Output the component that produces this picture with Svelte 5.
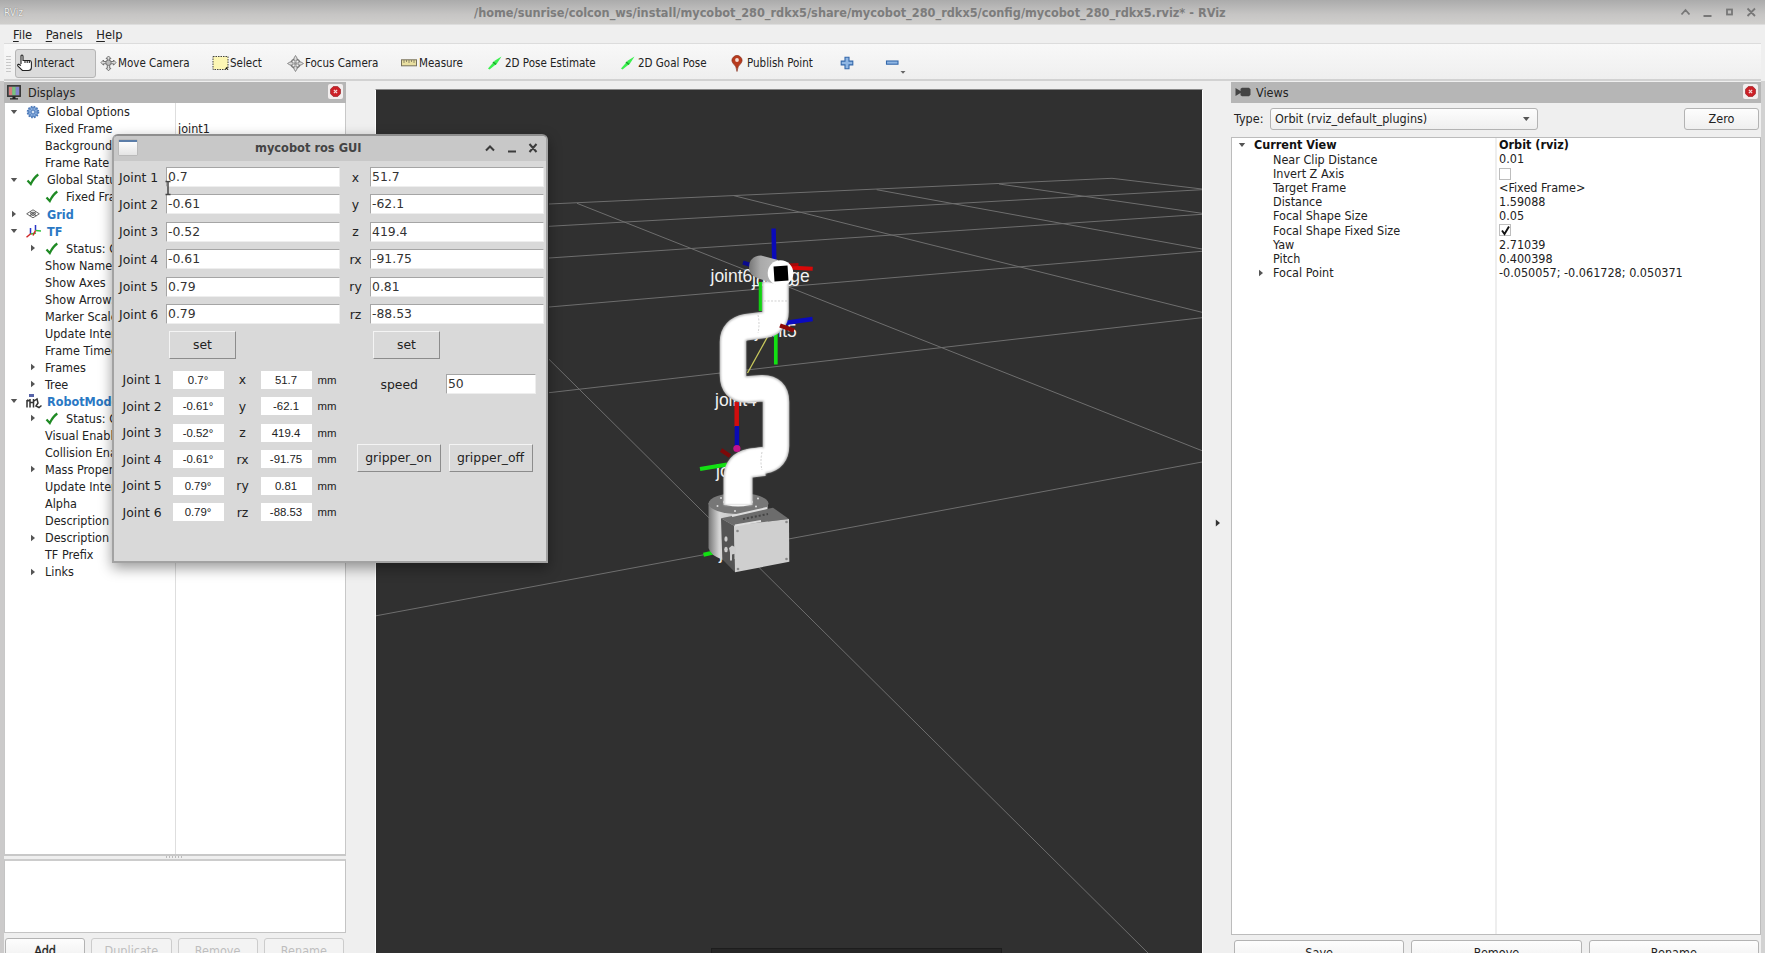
<script>
  const tools = [
    { icon: 'hand', label: 'Interact', width: 81, active: true },
    { icon: 'move', label: 'Move Camera', width: 112 },
    { icon: 'select', label: 'Select', width: 75 },
    { icon: 'focus', label: 'Focus Camera', width: 114 },
    { icon: 'ruler', label: 'Measure', width: 86 },
    { icon: 'arrow', label: '2D Pose Estimate', width: 133 },
    { icon: 'arrow', label: '2D Goal Pose', width: 111 },
    { icon: 'pin', label: 'Publish Point', width: 108 }
  ];

  const displays = [
    { d: 0, a: 'open', icon: 'gear', text: 'Global Options' },
    { d: 1, text: 'Fixed Frame', value: 'joint1' },
    { d: 1, text: 'Background Color' },
    { d: 1, text: 'Frame Rate' },
    { d: 0, a: 'open', icon: 'check', text: 'Global Status: Ok' },
    { d: 1, icon: 'check', text: 'Fixed Frame' },
    { d: 0, a: 'shut', icon: 'grid', text: 'Grid', link: true },
    { d: 0, a: 'open', icon: 'tf', text: 'TF', link: true },
    { d: 1, a: 'shut', icon: 'check', text: 'Status: Ok' },
    { d: 1, text: 'Show Names' },
    { d: 1, text: 'Show Axes' },
    { d: 1, text: 'Show Arrows' },
    { d: 1, text: 'Marker Scale' },
    { d: 1, text: 'Update Interval' },
    { d: 1, text: 'Frame Timeout' },
    { d: 1, a: 'shut', text: 'Frames' },
    { d: 1, a: 'shut', text: 'Tree' },
    { d: 0, a: 'open', icon: 'robot', text: 'RobotModel', link: true },
    { d: 1, a: 'shut', icon: 'check', text: 'Status: Ok' },
    { d: 1, text: 'Visual Enabled' },
    { d: 1, text: 'Collision Enabled' },
    { d: 1, a: 'shut', text: 'Mass Properties' },
    { d: 1, text: 'Update Interval' },
    { d: 1, text: 'Alpha' },
    { d: 1, text: 'Description Source' },
    { d: 1, a: 'shut', text: 'Description Topic' },
    { d: 1, text: 'TF Prefix' },
    { d: 1, a: 'shut', text: 'Links' }
  ];

  const views = [
    { text: 'Near Clip Distance', value: '0.01' },
    { text: 'Invert Z Axis', check: 'off' },
    { text: 'Target Frame', value: '<Fixed Frame>' },
    { text: 'Distance', value: '1.59088' },
    { text: 'Focal Shape Size', value: '0.05' },
    { text: 'Focal Shape Fixed Size', check: 'on' },
    { text: 'Yaw', value: '2.71039' },
    { text: 'Pitch', value: '0.400398' },
    { text: 'Focal Point', value: '-0.050057; -0.061728; 0.050371', a: 'shut' }
  ];

  const joints = ['0.7', '-0.61', '-0.52', '-0.61', '0.79', '0.79'];
  const axes = ['x', 'y', 'z', 'rx', 'ry', 'rz'];
  const coords = ['51.7', '-62.1', '419.4', '-91.75', '0.81', '-88.53'];

  const gridLines = [
    [549, 204, 1112, 178.3], [549, 226.3, 1202, 189.7], [549, 258, 1202, 214.3],
    [549, 307, 1202, 251.3], [549, 392.7, 1202, 317.7], [376, 615.8, 1202, 462],
    [577, 203.3, 1202, 450.7], [734, 195.7, 1202, 312.3], [876.6, 189.7, 1202, 249],
    [999, 184, 1202, 213.3], [1112, 178.3, 1202, 189], [549, 359.3, 1148, 953]
  ];

  const armPath = 'M775.5 282V312Q775.500 323 764 325L747 327Q733 329.500 733 342V375Q733 389.500 746 389.500L762 388.200Q776 388 776 402V446Q776 458.500 764 460.500L748 462.500';
  const footPath = 'M764 461.500L751 463Q738 465 738 478V505';
</script>

{#snippet glyph(name)}
  {#if name === 'hand'}
    <svg width="17" height="18" viewBox="0 0 17 18"><path d="M5 10V2.4q0-1.4 1-1.4t1 1.4V6.5h6.8q1.6.1 1.6 2v5q0 3-3 3H6.4L2 12.2q-1-1.7.6-2L5 11.6M9 6.5V9M11.2 6.5V9M13.3 6.7V9" fill="#fff" stroke="#222" stroke-width="1.1" /></svg>
  {:else if name === 'move'}
    <svg width="17" height="17" viewBox="0 0 17 17"><path d="M8.5 1l2.4 2.5H9.7v3h3.8V5L16 7.6l-2.5 2.6V8.8H9.7v4.5h1.2l-2.4 2.5-2.4-2.5h1.2V8.8H3.5v1.4L1 7.6 3.500 5v1.500h3.800v-3H6.100z" fill="#ddd" stroke="#666" stroke-width=".9" /><circle cx="8.500" cy="7.700" r="2.700" fill="#bbb" stroke="#666" stroke-width=".8" /></svg>
  {:else if name === 'select'}
    <svg width="17" height="16" viewBox="0 0 17 16"><rect x="1" y="1.500" width="15" height="13" fill="#fcf6b4" stroke="#444" stroke-dasharray="1.500 1" /><path d="M13 13.500l2.500-2v3z" fill="#111" /></svg>
  {:else if name === 'focus'}
    <svg width="17" height="17" viewBox="0 0 17 17"><circle cx="8.500" cy="8.500" r="4.500" fill="none" stroke="#777" stroke-width="1.500" /><circle cx="8.500" cy="8.500" r="1.700" fill="#999" /><path d="M8.500 .5l1.500 2.500v3h-3V3zM8.500 16.500l1.500-2.500v-3h-3v3zM.5 8.500L3 7h3v3H3zM16.500 8.500L14 7h-3v3h3z" fill="#ddd" stroke="#777" stroke-width=".8" /></svg>
  {:else if name === 'ruler'}
    <svg width="16" height="8" viewBox="0 0 16 8"><rect x=".5" y=".8" width="15" height="6" fill="#e9dfa0" stroke="#77715a" /><path d="M3 1v3M5.500 1v2M8 1v3M10.500 1v2M13 1v3" stroke="#77715a" stroke-width=".8" /></svg>
  {:else if name === 'arrow'}
    <svg width="16" height="16" viewBox="0 0 16 16"><path d="M1 13.500L8 5.500 14.500 1.500 10 8.500 2.500 14.500z" fill="#3bf04f" /><path d="M6 7l3 2.500" stroke="#1aa52c" stroke-width="1.500" /></svg>
  {:else if name === 'pin'}
    <svg width="12" height="17" viewBox="0 0 12 17"><path d="M6 16.500Q5.500 11 2.200 8.500a4.900 4.900 0 1 1 7.600 0Q6.500 11 6 16.500z" fill="#b83a1d" stroke="#7d2410" stroke-width=".6" /><circle cx="6" cy="5" r="1.900" fill="#f6ded6" /></svg>
  {:else if name === 'gear'}
    <svg width="14" height="14" viewBox="0 0 14 14"><circle cx="7" cy="7" r="5.300" fill="#7ba3d8" stroke="#4b78b8" stroke-width="2" stroke-dasharray="1.600 1.170" /><circle cx="7" cy="7" r="4.700" fill="#86abdc" stroke="#4b78b8" stroke-width=".7" /><path d="M7 3v8M3 7h8M4.200 4.200l5.600 5.600M9.800 4.200L4.200 9.800" stroke="#4b78b8" stroke-width=".7" /><circle cx="7" cy="7" r="1.700" fill="#d6e3f4" stroke="#4b78b8" stroke-width=".6" /></svg>
  {:else if name === 'check'}
    <svg width="14" height="13" viewBox="0 0 14 13"><path d="M1.500 7.500L4.800 11 Q8 4.500 12.300 1.500" fill="none" stroke="#1f8a24" stroke-width="2.200" /></svg>
  {:else if name === 'grid'}
    <svg width="14" height="10" viewBox="0 0 14 10"><path d="M7 .8L13.300 4.800 7 8.800 .7 4.800zM4 2.700l6.200 4.200M10 2.700L3.800 6.900M7 3L9.800 4.800 7 6.700 4.200 4.800z" fill="none" stroke="#555" stroke-width=".9" /></svg>
  {:else if name === 'tf'}
    <svg width="16" height="15" viewBox="0 0 16 15" fill="none" stroke-width="1.500"><path d="M4.500 10V4M9.500 6.500V1" stroke="#2b37c8" /><path d="M5 10l5-1M9.500 6.500l5.500.4" stroke="#30c240" /><path d="M5 9.500l-4.500 3.800M9.500 6.500L7 11.500" stroke="#d02626" /></svg>
  {:else if name === 'robot'}
    <svg width="16" height="15" viewBox="0 0 16 15"><path d="M3 0h5v3H3z" fill="#5663a8" /><path d="M1 6v7.500M4 5v8.500M7.500 5v8.500M4 8.500h4M8 7l3-2 1 4-2 3 3 1.500 2.500-2M1 6l3 1" fill="none" stroke="#333" stroke-width="1.500" /></svg>
  {/if}
{/snippet}

{#snippet arrowMark(kind)}
  <span class="mark">
    {#if kind === 'open'}
      <svg width="8" height="6" viewBox="0 0 8 6"><path d="M.8 1h6.400L4 5z" fill="#555" /></svg>
    {:else if kind === 'shut'}
      <svg width="6" height="8" viewBox="0 0 6 8"><path d="M1 .8v6.400L5 4z" fill="#555" /></svg>
    {/if}
  </span>
{/snippet}

{#snippet closeButton()}
  <span class="close"><svg width="11" height="11" viewBox="0 0 11 11"><path d="M3.300.5h4.400L10.500 3.300v4.400L7.700 10.500H3.300L.5 7.700V3.300z" fill="#cc1f26" stroke="#8f151a" stroke-width=".6" /><path d="M3.900 3.900l3.200 3.200M7.100 3.900L3.900 7.100" stroke="#f4dada" stroke-width="1.300" /></svg></span>
{/snippet}

<div class="window">
  <header class="titlebar">
    <span class="logo">RViz</span>
    <span class="title">/home/sunrise/colcon_ws/install/mycobot_280_rdkx5/share/mycobot_280_rdkx5/config/mycobot_280_rdkx5.rviz* - RViz</span>
    <svg class="winicons" width="80" height="14" viewBox="0 0 80 14" fill="none" stroke="#777" stroke-width="1.800"><path d="M3.500 9.500L7.500 5 11.500 9.500M25.500 11h8M69.500 3.500l7.500 7.500M77 3.500l-7.500 7.500" /><rect x="49" y="4.500" width="5" height="5" /></svg>
  </header>

  <nav class="menu">
    <span><u>F</u>ile</span><span><u>P</u>anels</span><span><u>H</u>elp</span>
  </nav>

  <div class="toolbar">
    <span class="grip"></span>
    {#each tools as tool}
      <div class="tool {tool.icon}" class:active={tool.active} style="width:{tool.width}px">
        <span class="ticon">{@render glyph(tool.icon)}</span><span>{tool.label}</span>
      </div>
    {/each}
    <svg class="plus" width="14" height="14" viewBox="0 0 14 14"><path d="M5 1.200h4v3.900h3.800v3.800H9v3.900H5V8.900H1.200V5.100H5z" fill="#8fb6e3" stroke="#3468ab" stroke-width="1.100" /></svg>
    <svg class="minus" width="20" height="20" viewBox="0 0 20 20"><rect x="1.500" y="8" width="11.500" height="3.200" fill="#8fb6e3" stroke="#3468ab" stroke-width="1.100" /><path d="M15.500 18h5l-2.500 2.800z" fill="#666" /></svg>
  </div>

  <main>
    <section class="dock left">
      <div class="dockhead">
        <svg width="14" height="15" viewBox="0 0 14 15"><rect x=".8" y=".8" width="12.400" height="10.400" fill="#888" stroke="#333" stroke-width="1.500" /><path d="M2 2h3.300v8H2z" fill="#d47d7d" /><path d="M5.300 2h3.400v8H5.300z" fill="#79c37e" /><path d="M8.700 2H12v8H8.700z" fill="#8585cf" /><path d="M5.500 11.500h3v1.800H11v1.200H3v-1.200h2.500z" fill="#222" /></svg>
        <span>Displays</span>{@render closeButton()}
      </div>
      <div class="tree">
        {#each displays as row}
          <div class="row">
            <div class="name depth{row.d}">
              {@render arrowMark(row.a)}
              {#if row.icon}<span class="ricon">{@render glyph(row.icon)}</span>{/if}
              <span class="label" class:link={row.link}>{row.text}</span>
            </div>
            <span class="value">{row.value ?? ''}</span>
          </div>
        {/each}
        <div class="filler"></div>
      </div>
      <div class="splitter"><i></i></div>
      <div class="help"></div>
      <div class="buttons">
        <button class="strong">Add</button><button disabled>Duplicate</button><button disabled>Remove</button><button disabled>Rename</button>
      </div>
    </section>

    <section class="viewport">
      <svg width="826" height="863" viewBox="376 90 826 863">
        <defs>
          <filter id="soft" filterUnits="userSpaceOnUse" x="690" y="260" width="130" height="270"><feGaussianBlur stdDeviation="1.300" /></filter>
          <linearGradient id="drum"><stop offset="0" stop-color="#777" /><stop offset=".18" stop-color="#d5d5d5" /><stop offset=".5" stop-color="#c4c4c4" /><stop offset="1" stop-color="#888" /></linearGradient>
          <linearGradient id="hub"><stop offset="0" stop-color="#777" /><stop offset=".4" stop-color="#aaa" /><stop offset="1" stop-color="#bbb" /></linearGradient>
        </defs>
        <g stroke="#6e6e6e" stroke-width="1">
          {#each gridLines as [x1, y1, x2, y2]}<line {x1} {y1} {x2} {y2} />{/each}
        </g>
        <g class="frames">
          <text x="710.500" y="281.500">joint6_flange</text>
          <text x="752" y="285.500">joint6</text>
          <text x="755" y="337">joint5</text>
          <text x="715" y="406">joint4</text>
          <text x="716" y="477">joint2</text>
          <text x="719" y="559">joint1</text>
        </g>
        <g fill="none" stroke-linecap="butt">
          <path d="M743 262.500l9 3" stroke="#0a0a8c" stroke-width="4" />
          <path d="M773.600 228.500l.7 34" stroke="#0a0ab8" stroke-width="4.500" />
          <path d="M760.500 282v29" stroke="#12d012" stroke-width="3.500" />
          <path d="M768 336L747.500 373" stroke="#c9c95c" stroke-width="1.300" />
          <path d="M775.800 333V364.500" stroke="#12e012" stroke-width="3.700" />
          <path d="M736.700 402V427" stroke="#d00d0d" stroke-width="4.500" />
          <path d="M736.900 426V447" stroke="#0a0ab4" stroke-width="4.500" />
          <path d="M721 450l9 6" stroke="#7c0808" stroke-width="4" />
          <path d="M700 469l27-4.500" stroke="#12e012" stroke-width="4" />
          <path d="M703.500 554.700l10-2.200" stroke="#12e012" stroke-width="4" />
          <path d="M788 267.500l24.700 1.300" stroke="#d80808" stroke-width="4" />
          <path d="M788 265l10.500-.6" stroke="#a80808" stroke-width="3" />
          <path d="M785 323l27.600-4" stroke="#0a0ac0" stroke-width="4.500" />
        </g>
        <path d="M708.500 503V548Q710 555 723 560L768 548V503z" fill="url(#drum)" />
        <ellipse cx="738.500" cy="503.500" rx="30" ry="10.500" fill="#777" />
        <g fill="#ddd"><circle cx="717.500" cy="506" r="1" /><circle cx="721" cy="498" r="1" /><circle cx="756" cy="506.500" r="1" /><circle cx="758" cy="498.500" r="1" /><circle cx="735" cy="511" r="1" /></g>
        <ellipse cx="738" cy="502" rx="14.800" ry="4.500" fill="#f2f2f2" />
        <path d={armPath} fill="none" stroke="#b0b0b0" stroke-width="26.500" />
        <path d={footPath} fill="none" stroke="#b8b8b8" stroke-width="29" />
        <path d={armPath} fill="none" stroke="#fff" stroke-width="24.500" filter="url(#soft)" />
        <path d={footPath} fill="none" stroke="#fff" stroke-width="27" filter="url(#soft)" />
        <path d="M764 301h23M758 315q2 9 0 18M762 452q-2 10 0 18" fill="none" stroke="#bbb" stroke-width=".7" stroke-dasharray="2 1.500" />
        <circle cx="736.900" cy="448.500" r="3.600" fill="#c4148c" />
        <path d="M780 325.500l14 5" stroke="#8e0808" stroke-width="4.500" />
        <path d="M749 268Q749 256 761 255.500L778 260V285L760 279Q749 276 749 268z" fill="url(#hub)" />
        <circle cx="780.500" cy="273" r="12.800" fill="#fff" />
        <path d="M773.500 266.500l14-1 1 15-14 1z" fill="#000" />
        <path d="M721 518.300L773 507.700 789 519 734 525.700z" fill="#6c6c6c" />
        <path d="M721 518.300L734 525.700 735 572.300 722.300 559.300z" fill="#545454" />
        <path d="M734 525.700L789 519 789.300 561.700 735 572.300z" fill="#cfcfcf" />
        <path d="M732 516l35-8M735 525.500l26-4.500" stroke="#ddd" stroke-width="2" />
        <path d="M743 519l25-5" stroke="#444" stroke-width="2" stroke-dasharray="2 2" />
        <g fill="#888"><circle cx="737.500" cy="531" r="1.300" /><circle cx="786.500" cy="522" r="1.300" /><circle cx="786.500" cy="559" r="1.300" /><circle cx="738" cy="569" r="1.300" /></g>
        <g fill="#ccc"><ellipse cx="726" cy="539" rx="1.600" ry="2.800" /><ellipse cx="726" cy="549.500" rx="1.800" ry="2.800" /><path d="M729 548l3-2.500 4 2v6l-4 1v6h-2v-8z" /></g>
        <rect x="711.500" y="948.500" width="290" height="6" fill="#262626" stroke="#1d1d1d" />
      </svg>
    </section>

    <div class="sash"><svg width="6" height="10" viewBox="0 0 6 10"><path d="M.8 1.500v7L5 5z" fill="#333" /></svg></div>

    <section class="dock right">
      <div class="dockhead">
        <svg width="16" height="10" viewBox="0 0 16 10"><path d="M.5 1L5.500 4V1.800L7 .8h7l1.500 1.500v5.400L14 9.200H7L5.500 8.200V6L.5 9z" fill="#444" /></svg>
        <span>Views</span>{@render closeButton()}
      </div>
      <div class="type">
        <span>Type:</span>
        <div class="combo"><span>Orbit (rviz_default_plugins)</span><svg width="9" height="6" viewBox="0 0 9 6"><path d="M1 1h6.600L4.300 5z" fill="#555" /></svg></div>
        <button>Zero</button>
      </div>
      <div class="vtree">
        <div class="row head"><div class="name">{@render arrowMark('open')}<b>Current View</b></div><b class="value">Orbit (rviz)</b></div>
        {#each views as row}
          <div class="row">
            <div class="name sub">{@render arrowMark(row.a)}<span>{row.text}</span></div>
            <span class="value">
              {#if row.check}
                <i class="box">{#if row.check === 'on'}<svg width="11" height="11" viewBox="0 0 11 11"><path d="M2 5.500L4.500 9 9 1.500" fill="none" stroke="#111" stroke-width="1.900" /></svg>{/if}</i>
              {:else}{row.value}{/if}
            </span>
          </div>
        {/each}
        <div class="filler"></div>
      </div>
      <div class="buttons"><button>Save</button><button>Remove</button><button>Rename</button></div>
    </section>
  </main>

  <div class="dialog">
    <div class="dtitle">
      <i class="appicon"></i><span>mycobot ros GUI</span>
      <svg width="52" height="14" viewBox="0 0 52 14" fill="none" stroke="#3c3c3c" stroke-width="2"><path d="M3 9.500L7 5.500 11 9.500M25 10.500h8M46.500 3l7 8M53.500 3l-7 8" transform="translate(-3 0)" /></svg>
    </div>
    <div class="dbody">
      <div class="entries">
        {#each joints as joint, i}
          <span>Joint {i + 1}</span><div class="entry">{joint}</div>
          <span class="axis">{axes[i]}</span><div class="entry">{coords[i]}</div>
        {/each}
      </div>
      <div class="sets"><div class="tkbtn">set</div><div class="tkbtn">set</div></div>
      <div class="lower">
        <div class="readout">
          {#each joints as joint, i}
            <span>Joint {i + 1}</span><em>{joint}°</em><span class="axis">{axes[i]}</span><em>{coords[i]}</em><small>mm</small>
          {/each}
        </div>
        <div class="side">
          <div class="speed"><span>speed</span><div class="entry">50</div></div>
          <div class="grippers"><div class="tkbtn">gripper_on</div><div class="tkbtn">gripper_off</div></div>
        </div>
      </div>
    </div>
    <svg class="ibeam" width="8" height="16" viewBox="0 0 8 16"><path d="M1.500 1.500h1.700q.8 0 .8.800v11.400q0 .8.800.8h1.700M6.500 1.500H4.800q-.8 0-.8.800M1.500 14.500h1.700q.8 0 .8-.8" fill="none" stroke="#444" stroke-width="1.500" /></svg>
  </div>
</div>

<style>
  :global(body) { background: #efefef; }
  .window {
    position: relative; display: flex; flex-direction: column; box-sizing: border-box;
    width: 1765px; height: 953px; overflow: hidden; background: #efefef; color: #222;
    font: 12.5px/17px "DejaVu Sans Condensed", "DejaVu Sans", sans-serif; font-stretch: condensed; white-space: nowrap;
  }
  svg { display: block; flex: none; }
  button { font: inherit; color: #222; padding: 0; box-sizing: border-box; border: 1px solid #b3b3b3; border-radius: 3px; background: linear-gradient(#fdfdfd, #efefef); }
  .titlebar { height: 25px; flex: none; display: flex; align-items: center; background: linear-gradient(#ababab, #c6c5c4 60%, #cfcecc); border-bottom: 1px solid #ddd; box-sizing: border-box; }
  .logo { width: 46px; padding-left: 4px; font-size: 10px; color: #eee; text-shadow: 0 0 1px #555; }
  .title { flex: 1; padding-left: 424px; font-weight: bold; font-size: 12.610px; color: #7c7c7c; }
  .winicons { margin-right: 7px; }
  .menu { height: 19px; flex: none; display: flex; gap: 13.500px; align-items: center; padding-left: 9px; margin: 0 4px; border-bottom: 1px solid #dcdcdc; box-sizing: border-box; font-size: 12.800px; }
  .menu u { text-underline-offset: 2px; }
  .toolbar { height: 37px; flex: none; display: flex; align-items: center; margin: 0 4px; padding: 3px 0 0 2px; background: linear-gradient(#f8f8f8, #efefef); border-bottom: 2px solid #d2d2d2; box-sizing: border-box; font-size: 11.5px; }
  .grip { width: 5px; height: 17px; margin-right: 4px; background: radial-gradient(circle, #c4c4c4 .8px, transparent 1px) 0 0 / 2.500px 3px; }
  .tool { display: flex; align-items: center; height: 29px; box-sizing: border-box; padding-left: 4px; }
  .tool.active { padding-left: 0; border: 1px solid #b5b5b5; border-radius: 3px; background: #dbdbdb; }
  .ticon { width: 18px; display: flex; justify-content: flex-start; flex: none; }
  .pin .ticon { width: 16px; }
  .plus { margin-left: 5px; }
  .minus { margin-left: 31px; overflow: visible; }
  main { flex: 1; min-height: 0; display: flex; border-left: 4px solid #cbcaca; border-right: 4px solid #d2d2d2; padding-top: 1px; }
  .dock { display: flex; flex-direction: column; flex: none; height: 871px; }
  .left { width: 342px; }
  .right { width: 530px; }
  .dockhead { height: 21px; flex: none; display: flex; align-items: center; gap: 7px; padding: 0 3px 1px; background: #b6b6b6; box-sizing: border-box; }
  .right .dockhead { padding: 0 3px 1px 4px; gap: 5px; }
  .close { margin-left: auto; margin-top: 2px; width: 15px; height: 15px; display: grid; place-items: center; background: #f2eeee; border-radius: 2px; align-self: flex-start; }
  .tree { height: 753px; flex: none; display: flex; flex-direction: column; box-sizing: border-box; background: #fff; border: solid #c8c8c8; border-width: 0 1px 2px 1px; padding-top: .3px; }
  .tree .row { height: 17.040px; flex: none; display: flex; }
  .tree .name { width: 171px; display: flex; align-items: center; box-sizing: border-box; border-right: 1px solid #dedede; overflow: hidden; }
  .mark { display: flex; flex: none; justify-content: center; width: 10px; }
  .depth0 { padding-left: 4px; }
  .depth0 .mark { margin-right: 7px; }
  .depth1 { padding-left: 23px; }
  .depth1 .mark { margin-right: 7px; }
  .ricon { width: 21px; flex: none; display: flex; }
  .depth0 .ricon { width: 21px; }
  .link { color: #2a78c4; font-weight: bold; }
  .tree .value { padding-left: 2px; }
  .filler { flex: 1; width: 171px; box-sizing: border-box; border-right: 1px solid #dedede; }
  .splitter { height: 3px; flex: none; display: flex; justify-content: center; }
  .splitter i { width: 18px; height: 2px; background: repeating-linear-gradient(90deg, #bbb 0 1px, transparent 1px 3px); }
  .help { height: 74px; flex: none; box-sizing: border-box; background: #fff; border: 1px solid #c4c4c4; border-top: 2px solid #ccc; }
  .buttons { display: flex; gap: 6px; padding: 5px 2px 0 1px; }
  .buttons button { flex: 1; height: 24px; }
  .left button:disabled { color: #bebebe; border-color: #ccc; background: #f3f3f3; }
  .strong { -webkit-text-stroke: .3px #222; }
  .viewport { margin-left: 29px; width: 826px; flex: none; height: 863px; margin-top: 7px; border: 1px solid #fff; border-top-color: #888; background: #303030; }
  .frames text { font: 17.500px "Liberation Sans", Arial, sans-serif; font-stretch: normal; fill: #f2f2f2; }
  .sash { width: 28px; flex: none; display: flex; align-items: flex-start; padding: 436px 0 0 12px; box-sizing: border-box; }
  .type { display: flex; align-items: center; height: 31px; flex: none; padding: 0 2px 0 3px; }
  .type > span { width: 36px; }
  .combo { width: 268px; height: 22px; box-sizing: border-box; display: flex; align-items: center; justify-content: space-between; padding: 0 6px 0 4px; border: 1px solid #b3b3b3; border-radius: 3px; background: linear-gradient(#fdfdfd, #efefef); }
  .type button { width: 75px; height: 22px; margin-left: auto; }
  .vtree { height: 798px; flex: none; display: flex; flex-direction: column; margin-top: 3px; padding-top: .3px; border: 1px solid #bcbcbc; box-sizing: border-box; background: #fff; }
  .vtree .row { height: 14.200px; flex: none; display: flex; line-height: 14px; }
  .vtree .name { width: 265px; display: flex; align-items: center; border-right: 2px solid #eee; box-sizing: border-box; padding-left: 5px; flex: none; }
  .vtree .name .mark { margin-right: 7px; }
  .vtree .name.sub { padding-left: 24px; }
  .vtree .name.sub .mark { margin-right: 7px; }
  .vtree .value { padding-left: 2px; }
  .vtree .filler { width: 265px; border-right: 2px solid #eee; }
  .vtree b { color: #111; }
  .box { display: grid; place-items: center; width: 12px; height: 12px; margin-top: 1px; box-sizing: border-box; border: 1px solid #bdbdbd; background: #fff; }
  .right .buttons { gap: 7px; padding: 5px 2px 0 3px; }
  .dialog { position: absolute; left: 112px; top: 134px; width: 436px; height: 429px; box-sizing: border-box; border: 2px solid #a2a2a2; border-top-color: #8e8e8e; border-radius: 6px 6px 0 0; background: #d9d9d9; box-shadow: 0 5px 14px rgba(0, 0, 0, .4); font-family: "DejaVu Sans", sans-serif; font-stretch: normal; font-size: 12.400px; }
  .dtitle { height: 25px; display: flex; align-items: center; background: #c8c8c8; border-radius: 4px 4px 0 0; padding: 0 8px 2px 5px; box-sizing: border-box; font: bold 12.700px "DejaVu Sans Condensed", "DejaVu Sans", sans-serif; font-stretch: condensed; color: #444; }
  .dtitle svg { margin-left: auto; overflow: visible; }
  .appicon { width: 18px; height: 15px; box-sizing: border-box; border-top: 2px solid #5b7da8; background: linear-gradient(#fdfdfd, #e4e4e4); box-shadow: 0 0 1px #777; }
  .dtitle span { margin-left: 118px; }
  .entries { display: grid; grid-template-columns: 47px 174px 30px 174px; grid-auto-rows: 20px; row-gap: 7.450px; padding: 6px 0 0 5px; align-items: center; }
  .entry { height: 20px; box-sizing: border-box; background: #fff; border: 1px solid #a5a5a5; border-right-color: #eee; border-bottom-color: #eee; padding-left: 1px; line-height: 18px; color: #333; }
  .axis { text-align: center; padding-left: 1px; }
  .sets { display: flex; gap: 137px; padding: 6.500px 0 0 55px; }
  .tkbtn { width: 67px; height: 28px; box-sizing: border-box; text-align: center; line-height: 25px; border: 1px solid #f4f4f4; border-right-color: #8c8c8c; border-bottom-color: #8c8c8c; }
  .lower { display: flex; }
  .readout { display: grid; grid-template-columns: 50px 51px 37px 51px 26px; grid-auto-rows: 18px; row-gap: 8.550px; align-items: center; padding: 12px 0 0 8.500px; }
  .readout em { font: 11.400px/18px "Liberation Sans", Arial, sans-serif; background: #fff; text-align: center; height: 18px; }
  .readout small { font: 11.400px "Liberation Sans", Arial, sans-serif; padding-left: 6px; }
  .side { padding-left: 19px; }
  .speed { display: flex; align-items: center; gap: 28px; padding: 15.500px 0 0 24px; }
  .speed .entry { width: 90px; }
  .grippers { display: flex; gap: 8px; padding-top: 49.500px; }
  .grippers .tkbtn { width: 84px; }
  .ibeam { position: absolute; left: 50px; top: 44px; }
</style>
